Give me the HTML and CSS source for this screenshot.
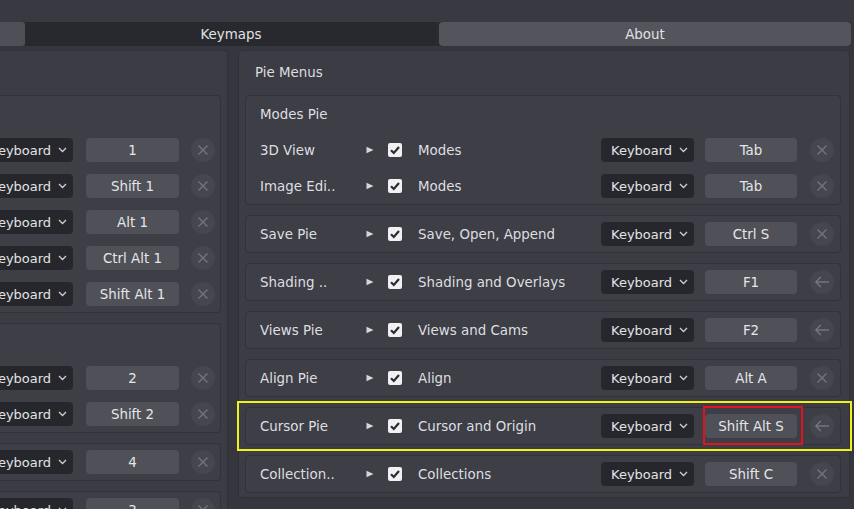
FILE: index.html
```html
<!DOCTYPE html>
<html>
<head>
<meta charset="utf-8">
<link rel="stylesheet" href="styles.css">
</head>
<body>
<div class="topstrip"></div>
<div class="tabs">
  <div class="tab tab-side"></div>
  <div class="tab tab-active">Keymaps</div>
  <div class="tab tab-about">About</div>
</div>
<div class="main">
  <div class="leftcol">
    <div class="panel panel-left">
      <div class="panel-head"></div>
      <div class="box">
        <div class="lrow"></div>
        <div class="lrow"><div class="dd">Keyboard<svg class="chev" width="9" height="6" viewBox="0 0 9 6"><path d="M1 1 L4.5 4.5 L8 1" stroke="#cfcfd2" stroke-width="1.3" fill="none"/></svg></div><div class="key">1</div><div class="ibtn"><svg width="12" height="12" viewBox="0 0 12 12"><path d="M1.5 1.5 L10.5 10.5 M10.5 1.5 L1.5 10.5" stroke="#74757c" stroke-width="1.4"/></svg></div></div>
        <div class="lrow"><div class="dd">Keyboard<svg class="chev" width="9" height="6" viewBox="0 0 9 6"><path d="M1 1 L4.5 4.5 L8 1" stroke="#cfcfd2" stroke-width="1.3" fill="none"/></svg></div><div class="key">Shift 1</div><div class="ibtn"><svg width="12" height="12" viewBox="0 0 12 12"><path d="M1.5 1.5 L10.5 10.5 M10.5 1.5 L1.5 10.5" stroke="#74757c" stroke-width="1.4"/></svg></div></div>
        <div class="lrow"><div class="dd">Keyboard<svg class="chev" width="9" height="6" viewBox="0 0 9 6"><path d="M1 1 L4.5 4.5 L8 1" stroke="#cfcfd2" stroke-width="1.3" fill="none"/></svg></div><div class="key">Alt 1</div><div class="ibtn"><svg width="12" height="12" viewBox="0 0 12 12"><path d="M1.5 1.5 L10.5 10.5 M10.5 1.5 L1.5 10.5" stroke="#74757c" stroke-width="1.4"/></svg></div></div>
        <div class="lrow"><div class="dd">Keyboard<svg class="chev" width="9" height="6" viewBox="0 0 9 6"><path d="M1 1 L4.5 4.5 L8 1" stroke="#cfcfd2" stroke-width="1.3" fill="none"/></svg></div><div class="key">Ctrl Alt 1</div><div class="ibtn"><svg width="12" height="12" viewBox="0 0 12 12"><path d="M1.5 1.5 L10.5 10.5 M10.5 1.5 L1.5 10.5" stroke="#74757c" stroke-width="1.4"/></svg></div></div>
        <div class="lrow"><div class="dd">Keyboard<svg class="chev" width="9" height="6" viewBox="0 0 9 6"><path d="M1 1 L4.5 4.5 L8 1" stroke="#cfcfd2" stroke-width="1.3" fill="none"/></svg></div><div class="key">Shift Alt 1</div><div class="ibtn"><svg width="12" height="12" viewBox="0 0 12 12"><path d="M1.5 1.5 L10.5 10.5 M10.5 1.5 L1.5 10.5" stroke="#74757c" stroke-width="1.4"/></svg></div></div>
      </div>
      <div class="box">
        <div class="lrow"></div>
        <div class="lrow"><div class="dd">Keyboard<svg class="chev" width="9" height="6" viewBox="0 0 9 6"><path d="M1 1 L4.5 4.5 L8 1" stroke="#cfcfd2" stroke-width="1.3" fill="none"/></svg></div><div class="key">2</div><div class="ibtn"><svg width="12" height="12" viewBox="0 0 12 12"><path d="M1.5 1.5 L10.5 10.5 M10.5 1.5 L1.5 10.5" stroke="#74757c" stroke-width="1.4"/></svg></div></div>
        <div class="lrow"><div class="dd">Keyboard<svg class="chev" width="9" height="6" viewBox="0 0 9 6"><path d="M1 1 L4.5 4.5 L8 1" stroke="#cfcfd2" stroke-width="1.3" fill="none"/></svg></div><div class="key">Shift 2</div><div class="ibtn"><svg width="12" height="12" viewBox="0 0 12 12"><path d="M1.5 1.5 L10.5 10.5 M10.5 1.5 L1.5 10.5" stroke="#74757c" stroke-width="1.4"/></svg></div></div>
      </div>
      <div class="box">
        <div class="lrow"><div class="dd">Keyboard<svg class="chev" width="9" height="6" viewBox="0 0 9 6"><path d="M1 1 L4.5 4.5 L8 1" stroke="#cfcfd2" stroke-width="1.3" fill="none"/></svg></div><div class="key">4</div><div class="ibtn"><svg width="12" height="12" viewBox="0 0 12 12"><path d="M1.5 1.5 L10.5 10.5 M10.5 1.5 L1.5 10.5" stroke="#74757c" stroke-width="1.4"/></svg></div></div>
      </div>
      <div class="box">
        <div class="lrow"><div class="dd">Keyboard<svg class="chev" width="9" height="6" viewBox="0 0 9 6"><path d="M1 1 L4.5 4.5 L8 1" stroke="#cfcfd2" stroke-width="1.3" fill="none"/></svg></div><div class="key">3</div><div class="ibtn"><svg width="12" height="12" viewBox="0 0 12 12"><path d="M1.5 1.5 L10.5 10.5 M10.5 1.5 L1.5 10.5" stroke="#74757c" stroke-width="1.4"/></svg></div></div>
      </div>
    </div>
  </div>

  <div class="panel panel-right">
    <div class="panel-head title">Pie Menus</div>

    <div class="box">
      <div class="row"><span class="lbl">Modes Pie</span></div>
      <div class="row">
        <span class="lbl">3D View</span>
        <svg class="tri" width="8" height="8" viewBox="0 0 8 8"><path d="M0.5 0.8 L7.5 4 L0.5 7.2Z" fill="#d6d6d9"/></svg>
        <span class="cb"><svg width="14" height="14" viewBox="0 0 14 14"><path d="M3 7.2 L5.8 10 L11 4" stroke="#2a2b2f" stroke-width="2.2" fill="none"/></svg></span>
        <span class="name">Modes</span>
        <div class="dd">Keyboard<svg class="chev" width="9" height="6" viewBox="0 0 9 6"><path d="M1 1 L4.5 4.5 L8 1" stroke="#cfcfd2" stroke-width="1.3" fill="none"/></svg></div>
        <div class="key">Tab</div>
        <div class="ibtn"><svg width="12" height="12" viewBox="0 0 12 12"><path d="M1.5 1.5 L10.5 10.5 M10.5 1.5 L1.5 10.5" stroke="#74757c" stroke-width="1.4"/></svg></div>
      </div>
      <div class="row">
        <span class="lbl">Image Edi..</span>
        <svg class="tri" width="8" height="8" viewBox="0 0 8 8"><path d="M0.5 0.8 L7.5 4 L0.5 7.2Z" fill="#d6d6d9"/></svg>
        <span class="cb"><svg width="14" height="14" viewBox="0 0 14 14"><path d="M3 7.2 L5.8 10 L11 4" stroke="#2a2b2f" stroke-width="2.2" fill="none"/></svg></span>
        <span class="name">Modes</span>
        <div class="dd">Keyboard<svg class="chev" width="9" height="6" viewBox="0 0 9 6"><path d="M1 1 L4.5 4.5 L8 1" stroke="#cfcfd2" stroke-width="1.3" fill="none"/></svg></div>
        <div class="key">Tab</div>
        <div class="ibtn"><svg width="12" height="12" viewBox="0 0 12 12"><path d="M1.5 1.5 L10.5 10.5 M10.5 1.5 L1.5 10.5" stroke="#74757c" stroke-width="1.4"/></svg></div>
      </div>
    </div>

    <div class="box">
      <div class="row">
        <span class="lbl">Save Pie</span>
        <svg class="tri" width="8" height="8" viewBox="0 0 8 8"><path d="M0.5 0.8 L7.5 4 L0.5 7.2Z" fill="#d6d6d9"/></svg>
        <span class="cb"><svg width="14" height="14" viewBox="0 0 14 14"><path d="M3 7.2 L5.8 10 L11 4" stroke="#2a2b2f" stroke-width="2.2" fill="none"/></svg></span>
        <span class="name">Save, Open, Append</span>
        <div class="dd">Keyboard<svg class="chev" width="9" height="6" viewBox="0 0 9 6"><path d="M1 1 L4.5 4.5 L8 1" stroke="#cfcfd2" stroke-width="1.3" fill="none"/></svg></div>
        <div class="key">Ctrl S</div>
        <div class="ibtn"><svg width="12" height="12" viewBox="0 0 12 12"><path d="M1.5 1.5 L10.5 10.5 M10.5 1.5 L1.5 10.5" stroke="#74757c" stroke-width="1.4"/></svg></div>
      </div>
    </div>

    <div class="box">
      <div class="row">
        <span class="lbl">Shading ..</span>
        <svg class="tri" width="8" height="8" viewBox="0 0 8 8"><path d="M0.5 0.8 L7.5 4 L0.5 7.2Z" fill="#d6d6d9"/></svg>
        <span class="cb"><svg width="14" height="14" viewBox="0 0 14 14"><path d="M3 7.2 L5.8 10 L11 4" stroke="#2a2b2f" stroke-width="2.2" fill="none"/></svg></span>
        <span class="name">Shading and Overlays</span>
        <div class="dd">Keyboard<svg class="chev" width="9" height="6" viewBox="0 0 9 6"><path d="M1 1 L4.5 4.5 L8 1" stroke="#cfcfd2" stroke-width="1.3" fill="none"/></svg></div>
        <div class="key">F1</div>
        <div class="ibtn"><svg width="16" height="12" viewBox="0 0 16 12"><path d="M15 6 H1.8 M6.8 1 L1.8 6 L6.8 11" stroke="#74757c" stroke-width="1.4" fill="none"/></svg></div>
      </div>
    </div>

    <div class="box">
      <div class="row">
        <span class="lbl">Views Pie</span>
        <svg class="tri" width="8" height="8" viewBox="0 0 8 8"><path d="M0.5 0.8 L7.5 4 L0.5 7.2Z" fill="#d6d6d9"/></svg>
        <span class="cb"><svg width="14" height="14" viewBox="0 0 14 14"><path d="M3 7.2 L5.8 10 L11 4" stroke="#2a2b2f" stroke-width="2.2" fill="none"/></svg></span>
        <span class="name">Views and Cams</span>
        <div class="dd">Keyboard<svg class="chev" width="9" height="6" viewBox="0 0 9 6"><path d="M1 1 L4.5 4.5 L8 1" stroke="#cfcfd2" stroke-width="1.3" fill="none"/></svg></div>
        <div class="key">F2</div>
        <div class="ibtn"><svg width="16" height="12" viewBox="0 0 16 12"><path d="M15 6 H1.8 M6.8 1 L1.8 6 L6.8 11" stroke="#74757c" stroke-width="1.4" fill="none"/></svg></div>
      </div>
    </div>

    <div class="box">
      <div class="row">
        <span class="lbl">Align Pie</span>
        <svg class="tri" width="8" height="8" viewBox="0 0 8 8"><path d="M0.5 0.8 L7.5 4 L0.5 7.2Z" fill="#d6d6d9"/></svg>
        <span class="cb"><svg width="14" height="14" viewBox="0 0 14 14"><path d="M3 7.2 L5.8 10 L11 4" stroke="#2a2b2f" stroke-width="2.2" fill="none"/></svg></span>
        <span class="name">Align</span>
        <div class="dd">Keyboard<svg class="chev" width="9" height="6" viewBox="0 0 9 6"><path d="M1 1 L4.5 4.5 L8 1" stroke="#cfcfd2" stroke-width="1.3" fill="none"/></svg></div>
        <div class="key">Alt A</div>
        <div class="ibtn"><svg width="12" height="12" viewBox="0 0 12 12"><path d="M1.5 1.5 L10.5 10.5 M10.5 1.5 L1.5 10.5" stroke="#74757c" stroke-width="1.4"/></svg></div>
      </div>
    </div>

    <div class="box box-hl">
      <div class="hl-yellow"></div>
      <div class="row">
        <span class="lbl">Cursor Pie</span>
        <svg class="tri" width="8" height="8" viewBox="0 0 8 8"><path d="M0.5 0.8 L7.5 4 L0.5 7.2Z" fill="#d6d6d9"/></svg>
        <span class="cb"><svg width="14" height="14" viewBox="0 0 14 14"><path d="M3 7.2 L5.8 10 L11 4" stroke="#2a2b2f" stroke-width="2.2" fill="none"/></svg></span>
        <span class="name">Cursor and Origin</span>
        <div class="dd">Keyboard<svg class="chev" width="9" height="6" viewBox="0 0 9 6"><path d="M1 1 L4.5 4.5 L8 1" stroke="#cfcfd2" stroke-width="1.3" fill="none"/></svg></div>
        <div class="key key-hl">Shift Alt S<div class="hl-red"></div></div>
        <div class="ibtn"><svg width="16" height="12" viewBox="0 0 16 12"><path d="M15 6 H1.8 M6.8 1 L1.8 6 L6.8 11" stroke="#74757c" stroke-width="1.4" fill="none"/></svg></div>
      </div>
    </div>

    <div class="box">
      <div class="row">
        <span class="lbl">Collection..</span>
        <svg class="tri" width="8" height="8" viewBox="0 0 8 8"><path d="M0.5 0.8 L7.5 4 L0.5 7.2Z" fill="#d6d6d9"/></svg>
        <span class="cb"><svg width="14" height="14" viewBox="0 0 14 14"><path d="M3 7.2 L5.8 10 L11 4" stroke="#2a2b2f" stroke-width="2.2" fill="none"/></svg></span>
        <span class="name">Collections</span>
        <div class="dd">Keyboard<svg class="chev" width="9" height="6" viewBox="0 0 9 6"><path d="M1 1 L4.5 4.5 L8 1" stroke="#cfcfd2" stroke-width="1.3" fill="none"/></svg></div>
        <div class="key">Shift C</div>
        <div class="ibtn"><svg width="12" height="12" viewBox="0 0 12 12"><path d="M1.5 1.5 L10.5 10.5 M10.5 1.5 L1.5 10.5" stroke="#74757c" stroke-width="1.4"/></svg></div>
      </div>
    </div>
  </div>
</div>
</body>
</html>
```

FILE: styles.css
```css
* { box-sizing: border-box; }
html, body { margin: 0; padding: 0; }
body {
  width: 854px;
  height: 509px;
  overflow: hidden;
  background: #36373e;
  font-family: "DejaVu Sans", "Liberation Sans", sans-serif;
  font-size: 13.4px;
  color: #dedee0;
}
.topstrip { height: 22px; background: #393a41; }
.tabs {
  display: flex;
  height: 24px;
  background: #2a2b30;
  width: 851px;
}
.tab {
  display: flex;
  align-items: center;
  justify-content: center;
  color: #e2e2e4;
}
.tab-side { width: 25px; background: #4e4f57; border-radius: 0 3px 3px 0; margin-right: 1px; }
.tab-active { width: 410px; background: #28292e; margin-right: 3px; }
.tab-about { width: 412px; background: #53545c; border-radius: 4px; }

.main {
  display: flex;
  gap: 10px;
  margin-top: 4px;
  align-items: flex-start;
}
.leftcol {
  width: 228px;
  flex: none;
  overflow: hidden;
}
.panel {
  background: #3b3c44;
  border: 1px solid #303137;
  border-radius: 4px;
  display: flex;
  flex-direction: column;
  gap: 10px;
}
.panel-left {
  border-left: none;
  border-radius: 0 4px 4px 0;
  padding: 3px 6px 4px 0;
}
.panel-right {
  width: 612px;
  flex: none;
  padding: 3px 8px 4px 6px;
}
.panel-head {
  height: 36px;
  margin-bottom: -5px;
  display: flex;
  align-items: center;
}
.title { padding-left: 10px; }
.box {
  background: #3d3e46;
  border: 1px solid #31323a;
  border-radius: 4px;
  position: relative;
}
.panel-left .box { border-left: none; border-radius: 0 4px 4px 0; padding-right: 5px; }
.lrow {
  height: 36px;
  display: flex;
  align-items: center;
  justify-content: flex-end;
}
.lrow .dd { flex: none; }
.lrow .key { margin-left: 13px; flex: none; width: 93px; }
.lrow .ibtn { margin-left: 12px; flex: none; }

.row {
  height: 36px;
  display: grid;
  grid-template-columns: 106px 22px 30px 183px 93px 103px 37px;
  align-items: center;
  padding-left: 14px;
}
.row .key { margin-left: 11px; width: 92px; }
.row .ibtn { margin-left: 13px; }
.lbl { white-space: nowrap; }
.tri { display: block; }
.cb {
  width: 14px;
  height: 14px;
  background: #f1f1f2;
  border-radius: 2px;
  display: block;
}
.cb svg { display: block; }
.name { white-space: nowrap; }
.dd {
  width: 93px;
  height: 24px;
  background: #26272c;
  border-radius: 4px;
  display: flex;
  align-items: center;
  padding-left: 10px;
  font-size: 13px;
  color: #e2e2e4;
  position: relative;
}
.chev { position: absolute; right: 6px; top: 9px; }
.key {
  height: 24px;
  background: #4f5058;
  border-radius: 4px;
  display: flex;
  align-items: center;
  justify-content: center;
  color: #e6e6e8;
  white-space: nowrap;
  position: relative;
}
.ibtn {
  width: 24px;
  height: 24px;
  border-radius: 50%;
  background: #45464e;
  display: flex;
  align-items: center;
  justify-content: center;
}
.hl-yellow {
  position: absolute;
  left: -9px;
  top: -7px;
  width: 615px;
  height: 50px;
  border: 2px solid #f2f21a;
  pointer-events: none;
}
.hl-red {
  position: absolute;
  left: -2px;
  top: -8px;
  width: 100px;
  height: 39px;
  border: 2px solid #e01420;
}
```
